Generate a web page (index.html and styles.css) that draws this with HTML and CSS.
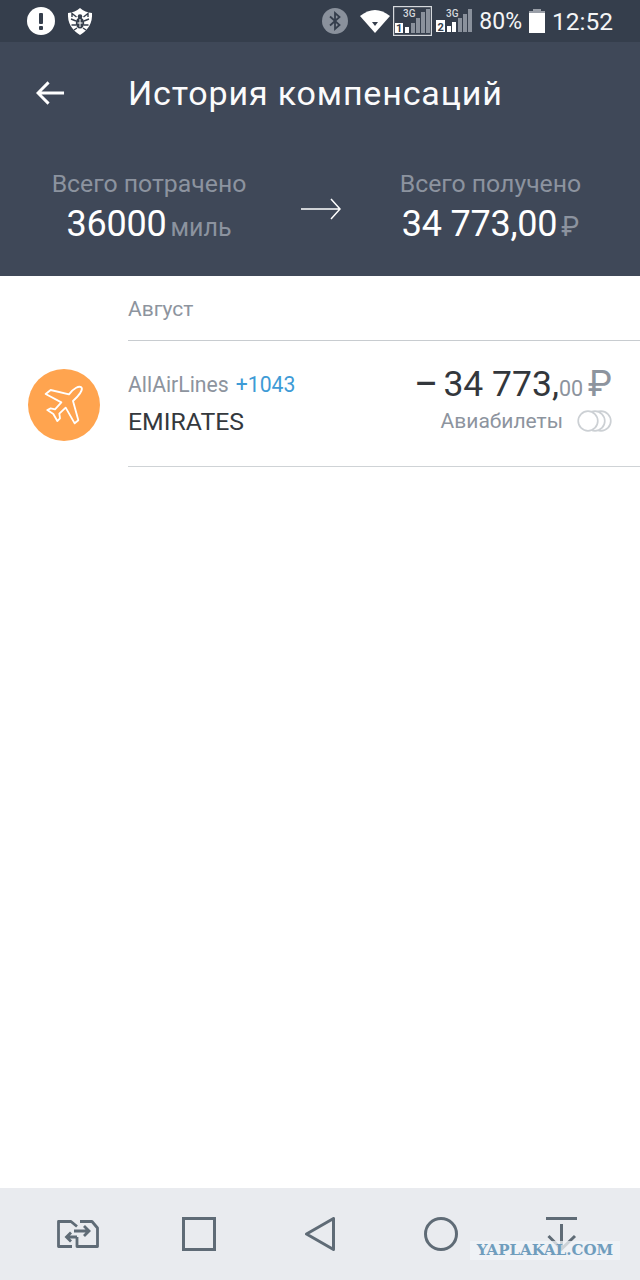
FILE: index.html
```html
<!DOCTYPE html>
<html lang="ru">
<head>
<meta charset="utf-8">
<title>История компенсаций</title>
<link rel="stylesheet" href="styles.css">
</head>
<body>
<div class="phone">
  <div class="status">
    <div class="status-left">
      <svg class="i-alert" viewBox="0 0 28 28"><circle cx="14" cy="14" r="14" fill="#fff"/><rect x="12" y="6" width="4" height="11" rx="1" fill="#353e4c"/><rect x="12" y="19" width="4" height="4" rx="1" fill="#353e4c"/></svg>
      <svg class="i-drweb" viewBox="0 0 26 27"><path d="M1 5 Q8 4.500 13 0 Q18 4.500 25 5 Q26 19 13 27 Q0 19 1 5Z" fill="#fff"/><ellipse cx="13" cy="15" rx="4.200" ry="5.500" fill="#353e4c"/><circle cx="13" cy="8.500" r="2.300" fill="#353e4c"/><path d="M9.500 9 L5 5.500 V9 M16.500 9 L21 5.500 V9 M9 13 L4 11 M17 13 L22 11 M9 17 L4.500 17 M17 17 L21.500 17 M10 20 L7 22 M16 20 L19 22" stroke="#353e4c" stroke-width="1.400" fill="none"/><path d="M13 11 V19 M10.500 15 H15.500" stroke="#fff" stroke-width="1"/></svg>
    </div>
    <div class="status-right">
      <svg class="i-bt" viewBox="0 0 26 26"><circle cx="13" cy="13" r="13" fill="#8a919c"/><path d="M8 8.500 L17.500 17 L13 21 V5 L17.500 9 L8 17.500" fill="none" stroke="#353e4c" stroke-width="1.800"/></svg>
      <svg class="i-wifi" viewBox="0 0 30 24"><path d="M0 7 Q15 -5 30 7 L15 24Z" fill="#fff"/><path d="M12 13 H18 L15 17Z" fill="#353e4c"/></svg>
      <svg class="i-sim1" viewBox="0 0 39 30"><rect x=".6" y=".6" width="37.800" height="28.800" fill="none" stroke="#d5d8dc" stroke-width="1.200"/><rect x="2" y="17" width="8" height="10" fill="#fff"/><rect x="12" y="21" width="4" height="6" fill="#fff"/><rect x="18" y="17" width="4" height="10" fill="#8a919c"/><rect x="23" y="12" width="4" height="15" fill="#8a919c"/><rect x="28" y="6" width="4" height="21" fill="#8a919c"/><rect x="33" y="3" width="4" height="24" fill="#8a919c"/><text x="10" y="11" class="g3">3G</text><text x="3" y="26" class="simn">1</text></svg>
      <svg class="i-sim2" viewBox="0 0 37 30"><rect x="0" y="14" width="9" height="12" fill="#fff"/><rect x="11" y="20" width="4" height="6" fill="#fff"/><rect x="16" y="16" width="4" height="10" fill="#fff"/><rect x="22" y="12" width="4" height="14" fill="#8a919c"/><rect x="27" y="8" width="4" height="18" fill="#8a919c"/><rect x="32" y="3" width="4" height="23" fill="#8a919c"/><text x="10" y="11" class="g3">3G</text><text x="1.500" y="25" class="simn">2</text></svg>
      <span class="st-text pct">80%</span>
      <svg class="i-bat" viewBox="0 0 16 24"><rect x="4" y="0" width="8" height="2" fill="#9a9fa8"/><rect x="0" y="2" width="16" height="3" fill="#9a9fa8"/><rect x="0" y="4" width="16" height="20" fill="#fff"/></svg>
      <span class="st-text clock">12:52</span>
    </div>
  </div>

  <header class="head">
    <div class="titlebar">
      <svg class="i-back" viewBox="0 0 30 26"><path d="M29 13 H2 M13 2 L2 13 L13 24" fill="none" stroke="#fff" stroke-width="3"/></svg>
      <h1>История компенсаций</h1>
    </div>
    <div class="totals">
      <div class="total total-a">
        <div class="t-label">Всего потрачено</div>
        <div class="t-value">36000<span class="t-unit">миль</span></div>
      </div>
      <svg class="i-arrow" viewBox="0 0 40 22"><path d="M0 11 H39 M30 1 L39 11 L30 21" fill="none" stroke="#fff" stroke-width="1.500"/></svg>
      <div class="total total-b">
        <div class="t-label">Всего получено</div>
        <div class="t-value">34 773,00<span class="t-unit rub">₽</span></div>
      </div>
    </div>
  </header>

  <main class="list">
    <div class="month">Август</div>
    <div class="row">
      <div class="avatar">
        <svg viewBox="60 60 120 120"><path d="M172 67 C165 62 150 68 135 88 L80 75 L65 87 L112 112 L93 133 L80 130 L70 135 L88 147 L100 168 L108 160 L106 146 L125 128 L152 175 L163 166 L147 108 C165 92 178 74 172 67Z" fill="none" stroke="#fff" stroke-width="5.500" stroke-linejoin="round"/></svg>
      </div>
      <div class="row-body">
        <div class="row-left">
          <div class="r-top">AllAirLines<span class="miles">+1043</span></div>
          <div class="r-name">EMIRATES</div>
        </div>
        <div class="row-right">
          <div class="amount"><span class="minus">–</span>34 773,<span class="cents">00</span><span class="cur">₽</span></div>
          <div class="cat">Авиабилеты
            <svg class="i-coins" viewBox="0 0 35 22"><circle cx="24" cy="11" r="9.800" fill="#fff" stroke="#ccd0d4" stroke-width="1.700"/><circle cx="18" cy="11" r="9.800" fill="#fff" stroke="#ccd0d4" stroke-width="1.700"/><circle cx="11" cy="11" r="9.800" fill="#fff" stroke="#ccd0d4" stroke-width="1.700"/></svg>
          </div>
        </div>
      </div>
    </div>
  </main>

  <nav class="navbar">
    <svg class="nav-i nav-sim" viewBox="0 0 42 28"><path d="M15 26.500 H1.500 V1.500 H14 L20 6.500 M23 1.500 H35 L40.500 8 V26.500 H20 V17" fill="none" stroke="#5f6b76" stroke-width="2.800" stroke-linejoin="round"/><path d="M17 11 H31 M27 6 L32 11 L27 16 M20 17 H10 M14 12.500 L9.500 17 L14 21.500" fill="none" stroke="#5f6b76" stroke-width="2.800"/></svg>
    <svg class="nav-i" viewBox="0 0 34 34"><rect x="1.500" y="1.500" width="31" height="31" fill="none" stroke="#5f6b76" stroke-width="3"/></svg>
    <svg class="nav-i" viewBox="0 0 30 34"><path d="M28.500 1.500 V32.500 L1.500 17Z" fill="none" stroke="#5f6b76" stroke-width="3" stroke-linejoin="round"/></svg>
    <svg class="nav-i" viewBox="0 0 34 34"><circle cx="17" cy="17" r="15.500" fill="none" stroke="#5f6b76" stroke-width="3"/></svg>
    <svg class="nav-i nav-dl" viewBox="0 0 32 34"><path d="M0 1.500 H31 M15.500 7 V32 M2.500 19 L15.500 32 L29 19" fill="none" stroke="#5f6b76" stroke-width="3"/></svg>
    <div class="watermark">YAPLAKAL.COM</div>
  </nav>
</div>
</body>
</html>
```
FILE: styles.css
```css
* { box-sizing: border-box; }
html, body { margin: 0; padding: 0; }
body { font-family: Roboto, "Noto Sans", sans-serif; background: #fff; }
.phone { width: 640px; height: 1280px; display: flex; flex-direction: column; position: relative; overflow: hidden; }

.status { height: 42px; background: #353e4c; display: flex; justify-content: space-between; align-items: center; padding: 0 27px; }
.status-left { display: flex; align-items: center; gap: 12px; }
.status-right { display: flex; align-items: center; }
.i-alert { width: 28px; height: 28px; }
.i-drweb { width: 26px; height: 27px; }
.i-bt { width: 26px; height: 26px; margin-right: 12px; }
.i-wifi { width: 30px; height: 24px; margin-right: 3px; }
.i-sim1 { width: 39px; height: 30px; margin-right: 4px; }
.i-sim2 { width: 37px; height: 30px; margin-right: 6px; }
.g3 { font: 500 10px Roboto, sans-serif; fill: #d5d8dc; }
.simn { font: 700 11px Roboto, sans-serif; fill: #353e4c; }
.st-text { color: #f4f5f6; }
.pct { font-size: 23px; }
.clock { font-size: 24.500px; }
.i-bat { width: 16px; height: 24px; margin: 0 7px; }

.head { height: 234px; background: #3f4858; color: #fff; }
.titlebar { height: 102px; display: flex; align-items: center; padding: 0 0 0 36px; }
.i-back { width: 29px; height: 26px; margin-right: 63px; }
h1 { margin: 0; font-size: 34px; font-weight: 400; letter-spacing: .85px; color: #fbfbfc; }
.totals { display: grid; grid-template-columns: 321px 1fr; position: relative; }
.total { text-align: center; }
.total-a { padding-right: 23px; }
.total-b { padding-left: 20px; }
.t-label { font-size: 24.800px; color: #8c939f; line-height: 30px; margin-top: 25px; }
.t-value { font-size: 36px; line-height: 44px; margin-top: 3px; color: #fff; letter-spacing: -.25px; }
.t-unit { font-size: 25px; color: #8c939f; margin-left: 4px; letter-spacing: 0; }
.t-unit.rub { font-size: 27px; margin-left: 4px; }
.i-arrow { position: absolute; left: 301px; top: 54px; width: 40px; height: 22px; }

.list { flex: 1; }
.month { margin-left: 128px; height: 65px; padding-top: 20px; font-size: 21px; line-height: 27px; color: #8d949e; border-bottom: 1px solid #c8ccd0; }
.row { display: flex; align-items: flex-start; }
.avatar { width: 72px; height: 72px; border-radius: 50%; background: #ffa44f; margin: 28px 28px 0 28px; display: flex; align-items: center; justify-content: center; flex: none; }
.avatar svg { width: 40px; height: 40px; }
.row-body { flex: 1; height: 126px; display: flex; justify-content: space-between; border-bottom: 1px solid #cfd3d6; padding-right: 28px; }
.r-top { font-size: 21.200px; line-height: 26px; color: #8d949e; margin-top: 31px; }
.miles { color: #3e9bd6; margin-left: 7px; }
.r-name { font-size: 24.800px; line-height: 30px; color: #34383d; margin-top: 9px; }
.row-right { text-align: right; }
.amount { font-size: 35.500px; line-height: 44px; color: #33373c; margin-top: 21px; white-space: nowrap; }
.minus { font-weight: 500; margin-right: 6px; }
.cents { font-size: 21.500px; color: #8d949e; }
.cur { font-size: 36px; color: #8d949e; margin-left: 5px; }
.cat { display: flex; justify-content: flex-end; align-items: center; gap: 14px; font-size: 21px; line-height: 28px; color: #8d949e; margin-top: -4px; }
.i-coins { width: 35px; height: 22px; }

.navbar { height: 92px; background: #e9ebef; position: relative; display: grid; grid-template-columns: 36px 34px 30px 34px 32px; column-gap: 89px; align-items: center; padding-left: 57px; }
.nav-i { display: block; width: 100%; }
.nav-i.nav-sim { width: 42px; }
.nav-i.nav-dl { margin-left: -1px; }
.watermark { position: absolute; left: 470px; top: 53px; width: 150px; height: 19px; background: rgba(240,244,248,.75); color: #6f9dbd; font: 700 15px/19px "DejaVu Serif", serif; text-align: center; letter-spacing: 0; }
```
